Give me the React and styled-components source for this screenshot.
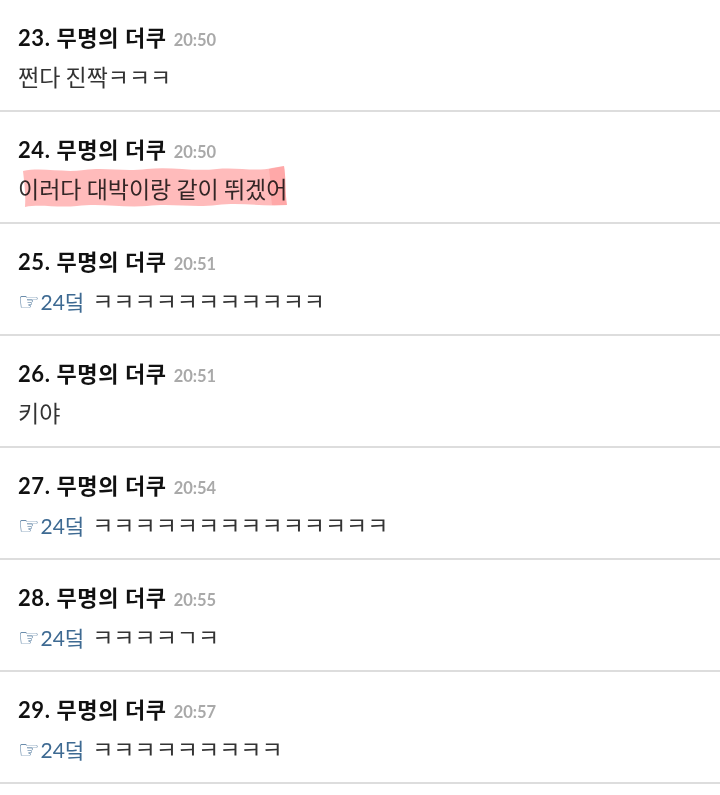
import React from "react";
import styled, { createGlobalStyle } from "styled-components";

const GlobalStyle = createGlobalStyle`
  html, body {
    margin: 0;
    padding: 0;
    background: #ffffff;
  }
  body {
    font-family: "Lato", "Noto Sans CJK KR", sans-serif;
  }
`;

const List = styled.div`
  width: 720px;
  background: #ffffff;
`;

const Comment = styled.div`
  box-sizing: border-box;
  height: 112px;
  padding: 23px 18px 0;
  border-bottom: 2px solid #dddddd;
`;

const Header = styled.div`
  display: flex;
  align-items: baseline;
  height: 30px;
  line-height: 30px;
`;

const Author = styled.span`
  font-family: "Lato", "Noto Sans CJK KR", sans-serif;
  font-weight: 700;
  font-size: 22px;
  color: #111111;
  letter-spacing: 0.6px;
`;

const Time = styled.span`
  font-family: "Lato", "Noto Sans CJK KR", sans-serif;
  font-weight: 700;
  font-size: 16.5px;
  color: #a9a9a9;
  margin-left: 7px;
`;

const Body = styled.div`
  margin-top: 8px;
  height: 30px;
  line-height: 30px;
  font-family: "Noto Sans CJK KR", sans-serif;
  font-size: 23px;
  color: #333333;
`;

const Marked = styled.span`
  position: relative;
  display: inline-block;
`;

const Marker = styled.svg`
  position: absolute;
  left: 4px;
  top: -10px;
  width: 266px;
  height: 46px;
  mix-blend-mode: multiply;
  pointer-events: none;
`;

const Anchor = styled.span`
  color: #3e6a92;
  font-family: "Lato", "Noto Sans CJK KR", sans-serif;
  font-size: 21px;
  margin-right: 8px;
`;

const Hand = styled.span`
  font-family: "DejaVu Sans", sans-serif;
  font-size: 24px;
  margin-right: 1px;
`;

const comments = [
  { no: 23, time: "20:50", text: "쩐다 진짝ㅋㅋㅋ" },
  { no: 24, time: "20:50", text: "이러다 대박이랑 같이 뛰겠어", marked: true },
  { no: 25, time: "20:51", reply: "24덬", text: "ㅋㅋㅋㅋㅋㅋㅋㅋㅋㅋㅋ" },
  { no: 26, time: "20:51", text: "키야" },
  { no: 27, time: "20:54", reply: "24덬", text: "ㅋㅋㅋㅋㅋㅋㅋㅋㅋㅋㅋㅋㅋㅋ" },
  { no: 28, time: "20:55", reply: "24덬", text: "ㅋㅋㅋㅋㄱㅋ" },
  { no: 29, time: "20:57", reply: "24덬", text: "ㅋㅋㅋㅋㅋㅋㅋㅋㅋ" },
];

function MarkerStroke() {
  return (
    <Marker viewBox="0 0 266 46" preserveAspectRatio="none">
      <path
        d="M1 8 C 20 4, 40 10, 62 7 C 85 4, 100 9, 125 6 C 150 3, 170 9, 195 6 C 215 4, 235 9, 250 5 L 262 3 C 264 14, 263 30, 265 42 C 240 44, 220 39, 195 42 C 170 45, 150 40, 125 43 C 100 45, 80 40, 55 43 C 35 45, 18 41, 3 44 C 4 30, 2 18, 1 8 Z"
        fill="rgba(255, 120, 120, 0.5)"
      />
      <path
        d="M247 6 C 249 18, 248 30, 250 42 L 265 42 C 263 30, 264 14, 262 3 Z"
        fill="rgba(255, 110, 110, 0.25)"
      />
    </Marker>
  );
}

export default function App() {
  return (
    <List>
      <GlobalStyle />
      {comments.map((c) => (
        <Comment key={c.no}>
          <Header>
            <Author>{c.no}. 무명의 더쿠</Author>
            <Time>{c.time}</Time>
          </Header>
          <Body>
            {c.reply && (
              <Anchor>
                <Hand>☞</Hand>
                {c.reply}
              </Anchor>
            )}
            {c.marked ? (
              <Marked>
                {c.text}
                <MarkerStroke />
              </Marked>
            ) : (
              c.text
            )}
          </Body>
        </Comment>
      ))}
    </List>
  );
}
